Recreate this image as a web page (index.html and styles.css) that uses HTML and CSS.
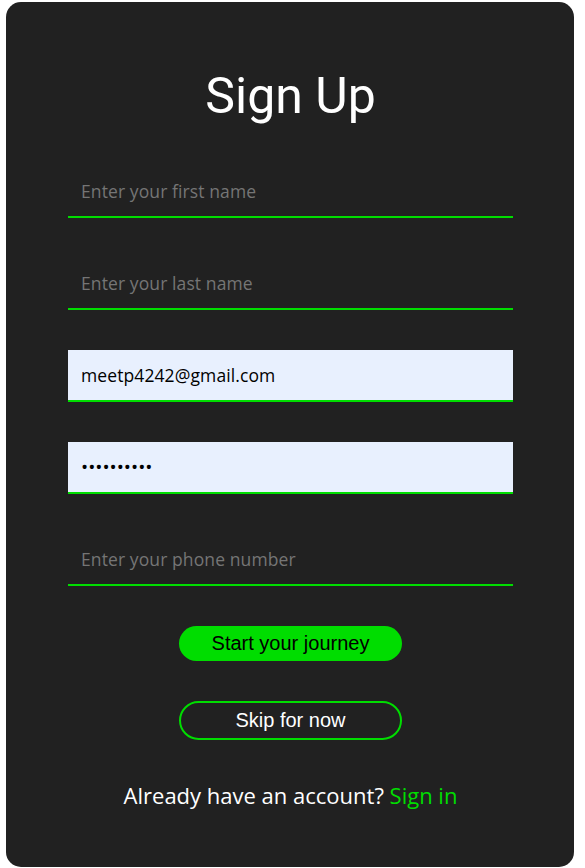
FILE: index.html
```html
<!DOCTYPE html>
<html lang="en">
<head>
<meta charset="utf-8">
<title>Sign Up</title>
<link rel="stylesheet" href="styles.css">
</head>
<body>
<div class="card">
  <h1 class="title">Sign Up</h1>
  <form class="form">
    <input class="field" type="text" placeholder="Enter your first name">
    <input class="field" type="text" placeholder="Enter your last name">
    <input class="field filled" type="email" value="meetp4242@gmail.com">
    <input class="field filled" type="password" value="1234567890">
    <input class="field" type="tel" placeholder="Enter your phone number">
    <div class="actions">
      <button class="btn btn-primary" type="button">Start your journey</button>
      <button class="btn btn-outline" type="button">Skip for now</button>
    </div>
    <p class="signin">Already have an account? <a class="signin-link" href="#">Sign in</a></p>
  </form>
</div>
</body>
</html>
```

FILE: styles.css
```css
* { box-sizing: border-box; }
html, body { margin: 0; padding: 0; background: #ffffff; }
body { padding: 2px 11px 1px 6px; }
.card {
  width: 568px;
  height: 865px;
  background: #212121;
  border-radius: 15px;
  padding: 65px 61px 0 62px;
}
.title {
  margin: 0 0 40px;
  font-family: Roboto, sans-serif;
  font-weight: 400;
  font-size: 50px;
  line-height: 59px;
  color: #ffffff;
  text-align: center;
}
.form {
  display: flex;
  flex-direction: column;
  gap: 40px;
}
.field {
  display: block;
  width: 445px;
  height: 52px;
  margin: 0;
  padding: 0 13px;
  border: none;
  border-bottom: 2px solid #00dd00;
  background: transparent;
  font-family: "Open Sans", sans-serif;
  font-size: 17.5px;
  letter-spacing: 0.1px;
  color: #000000;
  outline: none;
}
.field::placeholder { color: #757575; }
.field.filled { background: #e8f0fe; }
.field[type="password"] { font-size: 19px; letter-spacing: 0; }
.actions {
  display: flex;
  flex-direction: column;
  align-items: center;
  gap: 40px;
}
.btn {
  width: 223px;
  font-family: "Liberation Sans", Arial, sans-serif;
  font-size: 20px;
  border-radius: 20px;
  cursor: pointer;
  padding: 0;
}
.btn-primary {
  height: 35px;
  background: #00dd00;
  border: none;
  color: #000000;
}
.btn-outline {
  height: 39px;
  background: transparent;
  border: 2px solid #00dd00;
  color: #ffffff;
}
.signin {
  margin: 0;
  text-align: center;
  font-family: "Open Sans", sans-serif;
  font-size: 22px;
  line-height: 30px;
  color: #ffffff;
}
.signin-link { color: #00dd00; text-decoration: none; }
```
